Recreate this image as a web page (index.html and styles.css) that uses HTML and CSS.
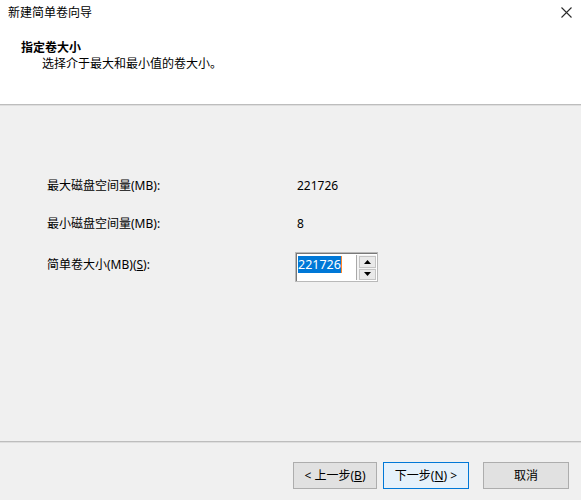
FILE: index.html
```html
<!DOCTYPE html>
<html lang="zh-CN">
<head>
<meta charset="utf-8">
<title>新建简单卷向导</title>
<link rel="stylesheet" href="styles.css">
</head>
<body>
<div class="dialog">
  <div class="header">
    <div class="titlebar">
      <span class="title">新建简单卷向导</span>
      <svg class="close" width="11" height="11" viewBox="0 0 11 11"><path d="M0.5 0.5 L10.5 10.5 M10.5 0.5 L0.5 10.5" stroke="#2b2b2b" stroke-width="1.1" fill="none"/></svg>
    </div>
    <div class="heading">指定卷大小</div>
    <div class="desc">选择介于最大和最小值的卷大小。</div>
  </div>
  <div class="rule"></div>
  <div class="content">
    <div class="form">
      <div class="label">最大磁盘空间量(MB):</div>
      <div class="value">221726</div>
      <div class="label">最小磁盘空间量(MB):</div>
      <div class="value">8</div>
      <div class="label top">简单卷大小(MB)(<u>S</u>):</div>
      <div class="spin">
        <div class="spin-text"><span class="sel">221726</span><span class="caret"></span></div>
        <div class="spin-btns">
          <div class="spin-btn"><svg width="7" height="4" viewBox="0 0 7 4"><path d="M3.5 0 L7 4 L0 4 Z" fill="#000"/></svg></div>
          <div class="spin-btn"><svg width="7" height="4" viewBox="0 0 7 4"><path d="M0 0 L7 0 L3.5 4 Z" fill="#000"/></svg></div>
        </div>
      </div>
    </div>
  </div>
  <div class="rule"></div>
  <div class="footer">
    <button class="btn prev">&lt; 上一步(<u>B</u>)</button>
    <button class="btn next default">下一步(<u>N</u>) &gt;</button>
    <button class="btn cancel">取消</button>
  </div>
</div>
</body>
</html>
```
FILE: styles.css
```css
html, body {
  margin: 0;
  padding: 0;
  background: #f0f0f0;
}
body {
  font-family: "Noto Sans", "Noto Sans CJK SC", sans-serif;
  font-size: 12px;
  color: #000;
}
.dialog {
  width: 581px;
  height: 500px;
  display: flex;
  flex-direction: column;
  overflow: hidden;
}
.header {
  background: #fff;
  height: 104px;
  box-sizing: border-box;
  padding: 5px 9px 0 8px;
  flex: none;
}
.titlebar {
  display: flex;
  justify-content: space-between;
  align-items: center;
  height: 16px;
  line-height: 16px;
}
.close {
  margin-top: -2px;
}
.heading {
  margin: 19px 0 0 13px;
  font-weight: bold;
  line-height: 16px;
}
.desc {
  margin-left: 34px;
  line-height: 16px;
}
.rule {
  flex: none;
  height: 1px;
  background: #bdbdbd;
  border-bottom: 1px solid #dedede;
}
.content {
  flex: none;
  height: 335px;
  box-sizing: border-box;
  padding: 70px 0 0 47px;
}
.form {
  display: grid;
  grid-template-columns: 250px 83px;
  grid-template-rows: 20px 20px 30px;
  row-gap: 18px;
  align-items: center;
}
.label, .value {
  line-height: 16px;
}
.label.top {
  align-self: start;
  padding-top: 5px;
}
.spin {
  width: 83px;
  height: 30px;
  margin-left: -2px;
  box-sizing: border-box;
  border: 1px solid #b9b9b9;
  box-shadow: inset 1px 1px 0 #787878;
  background: #fff;
  display: flex;
  padding: 2px 1px 1px 2px;
}
.spin-text {
  flex: 1;
  display: flex;
  align-items: flex-start;
  padding-top: 1px;
  line-height: 17px;
  font-size: 12.5px;
}
.sel {
  background: #0078d7;
  color: #fff;
}
.caret {
  width: 1px;
  height: 17px;
  background: #ff8728;
}
.spin-btns {
  width: 17px;
  display: flex;
  flex-direction: column;
  gap: 1px;
  border-left: 1px solid #a9a9a9;
  background: #f4f4f4;
  padding: 1px 0 0 2px;
}
.spin-btn {
  flex: 1;
  display: flex;
  align-items: center;
  justify-content: center;
  background: #e9e9e9;
  border: 1px solid #c4c4c4;
}
.footer {
  flex: 1;
  display: flex;
  align-items: flex-start;
  padding: 19px 12px 0 0;
  justify-content: flex-end;
}
.btn {
  font-family: inherit;
  font-size: 12px;
  color: #000;
  height: 27px;
  box-sizing: border-box;
  background: #e1e1e1;
  border: 1px solid #adadad;
  padding: 0;
  line-height: 16px;
  margin: 0;
}
.prev { width: 84px; }
.next { width: 86px; margin-left: 6px; }
.cancel { width: 86px; margin-left: 14px; }
.btn.default {
  background: #e5f1fb;
  border: 1px solid #0078d7;
}
```
